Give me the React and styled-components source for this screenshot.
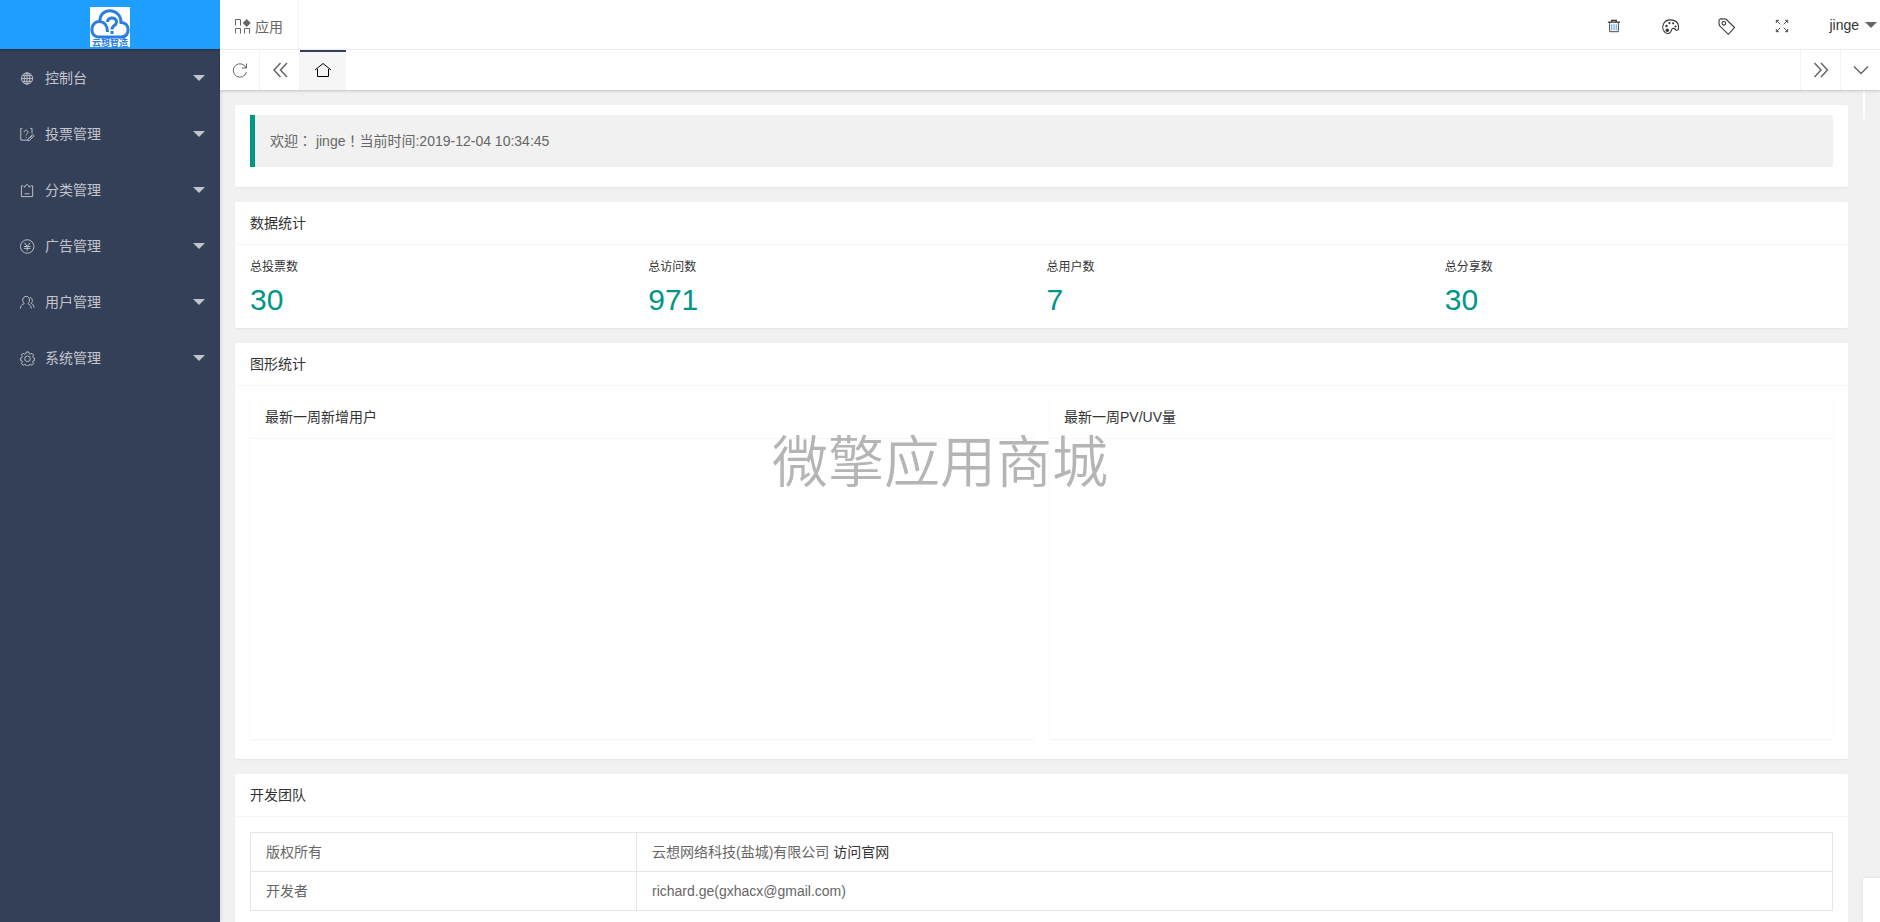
import React from "react";
import styled, { createGlobalStyle } from "styled-components";

const GlobalStyle = createGlobalStyle`
  * {
    box-sizing: border-box;
  }

  body {
    margin: 0;
    background: #f1f1f1;
    color: #666;
    font: 14px/24px "Liberation Sans", "Noto Sans CJK SC", sans-serif;
  }

  button {
    padding: 0;
    border: 0;
    background: none;
    color: inherit;
    font: inherit;
    cursor: pointer;
  }

  a {
    color: inherit;
    text-decoration: none;
  }
`;

const Layout = styled.div`
  display: flex;
  height: 100vh;
  overflow: hidden;
`;

const Side = styled.aside`
  flex: none;
  width: 220px;
  background: #344058;
  color: #c2c5cc;
  box-shadow: 1px 0 4px rgba(0, 0, 0, 0.1);
`;

const LogoBar = styled.div`
  display: flex;
  justify-content: center;
  height: 49px;
  padding-top: 7px;
  background: #1e9fff;
  box-shadow: 0 1px 2px rgba(0, 0, 0, 0.3);
`;

const LogoBox = styled.div`
  display: flex;
  flex-direction: column;
  align-items: center;
  width: 40px;
  height: 40px;
  background: #fff;
`;

const LogoText = styled.span`
  color: #2a7de1;
  font-size: 9px;
  font-weight: 700;
  line-height: 8px;
`;

const Menu = styled.nav`
  display: flex;
  flex-direction: column;
  padding-top: 1px;
`;

const MenuItem = styled.button`
  display: flex;
  align-items: center;
  gap: 10px;
  height: 56px;
  padding: 0 15px 0 20px;
  text-align: left;
`;

const MenuLabel = styled.span`
  flex: 1;
`;

const Arrow = styled.span`
  border: 6px solid transparent;
  border-top-color: ${(props) => props.$color || "#c2c5cc"};
  border-bottom-width: 0;
`;

const Main = styled.div`
  display: flex;
  flex: 1;
  flex-direction: column;
  min-width: 0;
`;

const Header = styled.header`
  display: flex;
  justify-content: space-between;
  height: 50px;
  background: #fff;
  border-bottom: 1px solid #f4f4f4;
`;

const AppTab = styled.button`
  display: flex;
  align-items: center;
  gap: 4px;
  padding: 4px 15px 0 15px;
  border-right: 1px solid #f4f4f4;
`;

const Tools = styled.div`
  display: flex;
  color: #333;
`;

const Tool = styled.button`
  display: flex;
  align-items: center;
  justify-content: center;
  width: 56px;
  padding-top: 3px;
`;

const User = styled.button`
  display: flex;
  align-items: center;
  gap: 6px;
  padding: 0 3px 0 19px;
`;

const Tabs = styled.div`
  display: flex;
  flex: none;
  height: 40px;
  background: #fff;
  box-shadow: 0 1px 3px rgba(0, 0, 0, 0.2);
  z-index: 1;
`;

const TabButton = styled.button`
  display: flex;
  align-items: center;
  justify-content: center;
  width: 40px;
  border-${(props) => props.$edge}: 1px solid #f4f4f4;
`;

const HomeTab = styled.button`
  display: flex;
  justify-content: center;
  width: 46px;
  margin-right: auto;
  padding-top: 10px;
  background: #f6f6f6;
  border-top: 2px solid #344058;
  color: #000;
`;

const Body = styled.div`
  display: flex;
  flex: 1;
  gap: 15px;
  min-height: 0;
  padding-left: 15px;
`;

const Content = styled.main`
  flex: 1;
  min-width: 0;
  padding: 15px 0;
  overflow-y: auto;
  scrollbar-width: none;
`;

const Rail = styled.div`
  display: flex;
  flex-direction: column;
  justify-content: space-between;
  width: 17px;
`;

const RailTop = styled.div`
  width: 2px;
  height: 29px;
  background: #fff;
`;

const RailBottom = styled.div`
  height: 44px;
  background: #fff;
  box-shadow: 0 0 3px rgba(0, 0, 0, 0.08);
`;

const Card = styled.section`
  margin-bottom: 15px;
  background: #fff;
  border-radius: 2px;
  box-shadow: 0 1px 2px rgba(0, 0, 0, 0.05);
`;

const CardTitle = styled.h2`
  height: 43px;
  margin: 0;
  padding: 0 15px;
  border-bottom: 1px solid #f6f6f6;
  color: #333;
  font-size: 14px;
  font-weight: 400;
  line-height: 42px;
`;

const CardBody = styled.div`
  padding: ${(props) => props.$pad || "10px 15px"};
`;

const Quote = styled.blockquote`
  margin: 0 0 10px;
  padding: 15px;
  background: #f1f1f1;
  border-left: 5px solid #009688;
  border-radius: 0 2px 2px 0;
  font-family: "Liberation Sans", "Noto Sans CJK TC", sans-serif;
  line-height: 22px;
`;

const Stats = styled.dl`
  display: grid;
  grid-template-columns: repeat(4, 1fr);
  gap: 10px;
  margin: 0;
`;

const StatLabel = styled.dt`
  color: #333;
  font-size: 12px;
  line-height: 24px;
`;

const StatValue = styled.dd`
  margin: 3px 0 0;
  color: #009688;
  font-size: 30px;
  line-height: 36px;
`;

const Charts = styled.div`
  display: grid;
  grid-template-columns: 1fr 1fr;
  gap: 15px;
  margin-bottom: 10px;
`;

const ChartCard = styled(Card)`
  margin: 0;
`;

const ChartArea = styled.div`
  height: 300px;
`;

const Table = styled.table`
  width: 100%;
  border-collapse: collapse;

  th,
  td {
    height: 39px;
    padding: 0 15px;
    border: 1px solid #e6e6e6;
    font-weight: 400;
    text-align: left;
    line-height: 20px;
  }

  th {
    width: 386px;
  }

  a {
    color: #333;
  }
`;

const Watermark = styled.div`
  position: fixed;
  inset: 0;
  display: flex;
  align-items: center;
  justify-content: center;
  padding-bottom: 6px;
  color: #b5b5b5;
  font-family: "Noto Sans CJK SC", sans-serif;
  font-size: 56px;
  font-weight: 350;
  line-height: 56px;
  pointer-events: none;
  z-index: 2;
`;

const Icon = ({ size = 16, weight = 1, children }) => (
  <svg
    width={size}
    height={size}
    viewBox="0 0 16 16"
    fill="none"
    stroke="currentColor"
    strokeWidth={weight}
    aria-hidden="true"
  >
    {children}
  </svg>
);

const GlobeIcon = () => (
  <Icon size={15}>
    <circle cx="7.500" cy="8" r="6" />
    <ellipse cx="7.500" cy="8" rx="3" ry="6" />
    <path d="M7.500 2v12M1.500 8h12M2.500 5h10M2.500 11h10" />
  </Icon>
);

const VoteIcon = () => (
  <Icon size={15}>
    <path d="M2.500 1.500H.8v12.500H9M11 1.500h1.800V7" />
    <path d="M4.500 5.500c0-3 4-2.500 4 0 0 1.500-2 1.500-2 3.500M6.500 10.500v1" />
    <path d="M8.500 13l5-5 1.500 1.500-5 5H8.500zM10.500 12l2.500-2.500" />
  </Icon>
);

const ClipboardIcon = () => (
  <Icon size={15}>
    <path d="M3.500 3H1.500v11.500h12V3h-2" />
    <path d="M4.500 5V3.500H6c0-2.500 3-2.500 3 0h1.500V5M5 11.500h5" />
  </Icon>
);

const YenIcon = () => (
  <Icon size={15}>
    <circle cx="7.700" cy="8" r="7.200" />
    <path d="M4.700 4l3 4 3-4M4.200 8h7M4.200 10h7M7.700 8v4.500" />
  </Icon>
);

const UserIcon = () => (
  <Icon size={15}>
    <path d="M.5 14.500c0-3 1.500-4.500 4-5.200C1.500 6 3 1.500 6.500 1.500s5 4.500 2 7.800c2 .7 3.300 2.200 3.500 5.200" />
    <path d="M10.500 2.500c3 .8 3.500 4 1.500 6.500 1.500.7 2.700 2 3 4.500" />
  </Icon>
);

const GearIcon = () => (
  <Icon size={15}>
    <path d="M6.700 1h2.600l.5 1.900 1.200.5 1.700-1 1.800 1.800-1 1.700.5 1.200 1.500.4v2.600l-1.500.4-.5 1.200 1 1.700-1.800 1.800-1.700-1-1.200.5-.5 1.300H6.700l-.5-1.300-1.200-.5-1.700 1-1.800-1.800 1-1.700-.5-1.200L.6 10V7.500L2 7.100l.5-1.200-1-1.700 1.800-1.800 1.700 1 1.200-.5z" />
    <circle cx="8" cy="8.300" r="3" />
  </Icon>
);

const AppIcon = () => (
  <Icon>
    <path d="M.5 6.500v-6h5v6M.5 14.500v-5h5v5M9.500 14.500v-5h5v5" />
    <path d="M11.700 0l4 4-4 4-4-4z" fill="currentColor" stroke="none" />
  </Icon>
);

const TrashIcon = () => (
  <Icon size={14}>
    <path d="M1 3.500h14M5.500 3V1.500h5V3" strokeWidth="1.500" />
    <path d="M3 4v10.500h10V4" />
    <path d="M5.500 6v7M8 6v7M10.500 6v7" stroke="#4a90c8" />
  </Icon>
);

const PaletteIcon = () => (
  <Icon size={17}>
    <path d="M3.500 14C1 12.500 0 9 1.500 5.500 3 2.500 6.500 1.300 10 2c4 .8 6 4 5.500 8-.3 2-2 2-3 .7-1.500-1.700-3.500-.9-3.700 1C8.500 14 5.500 15.500 3.500 14z" />
    <g fill="currentColor" stroke="none">
      <circle cx="7" cy="4.800" r="1" />
      <circle cx="10.500" cy="5" r="1" />
      <circle cx="4.200" cy="7.500" r="1.100" />
      <circle cx="12.700" cy="8" r="1" />
      <circle cx="5" cy="11.500" r="1.600" />
    </g>
  </Icon>
);

const TagIcon = () => (
  <Icon size={17}>
    <path d="M1 5.500V1.800L2.500.7l5 .3 8 8-5.800 6.300-8.200-8z" />
    <circle cx="5.500" cy="5" r="1.700" />
  </Icon>
);

const ExpandIcon = () => (
  <Icon size={14}>
    <path d="M1.500 4.500v-3h3M2 2l4 4M11.500 1.500h3v3M14 2l-4 4M1.500 11.500v3h3M2 14l4-4M11.500 14.500h3v-3M14 14l-4-4" />
  </Icon>
);

const RefreshIcon = () => (
  <Icon>
    <path d="M14.200 6A6.700 6.700 0 1 0 14.500 10M14.500 1.500V6H10" />
  </Icon>
);

const LeftIcon = () => (
  <Icon weight={1.500}>
    <path d="M8.500 1L2 8l6.500 7M15 1L8.500 8l6.500 7" />
  </Icon>
);

const RightIcon = () => (
  <Icon weight={1.500}>
    <path d="M1.500 1L8 8l-6.500 7M8 1l6.500 7L8 15" />
  </Icon>
);

const DownIcon = () => (
  <Icon weight={1.500}>
    <path d="M1 4.500l7 7 7-7" />
  </Icon>
);

const HomeIcon = () => (
  <Icon>
    <path d="M0 8l8-6.500L16 8M2.500 7v7.500h11V7" />
  </Icon>
);

const menus = [
  { name: "控制台", icon: GlobeIcon },
  { name: "投票管理", icon: VoteIcon },
  { name: "分类管理", icon: ClipboardIcon },
  { name: "广告管理", icon: YenIcon },
  { name: "用户管理", icon: UserIcon },
  { name: "系统管理", icon: GearIcon },
];

const tools = [
  { name: "清除缓存", icon: TrashIcon },
  { name: "主题", icon: PaletteIcon },
  { name: "便签", icon: TagIcon },
  { name: "全屏", icon: ExpandIcon },
];

const stats = [
  { name: "总投票数", value: 30 },
  { name: "总访问数", value: 971 },
  { name: "总用户数", value: 7 },
  { name: "总分享数", value: 30 },
];

const Logo = () => (
  <LogoBox>
    <svg width="40" height="32" viewBox="0 0 40 32" fill="none" stroke="#2a7de1" strokeWidth="3">
      <path d="M17.500 25c0-6-3-10.500-8.500-10.500-9 0-10 15.500 0 15.500h22c10 0 9-15 0-14.500C31 0 9 0 10 14.500" />
      <path d="M17.500 15c0-5.500 9-5.500 9 0 0 4-4.500 3-4.500 7.500M22 24v3" />
    </svg>
    <LogoText>云想智造</LogoText>
  </LogoBox>
);

const Sidebar = () => (
  <Side>
    <LogoBar>
      <Logo />
    </LogoBar>
    <Menu>
      {menus.map(({ name, icon: MenuIcon }) => (
        <MenuItem key={name}>
          <MenuIcon />
          <MenuLabel>{name}</MenuLabel>
          <Arrow />
        </MenuItem>
      ))}
    </Menu>
  </Side>
);

const App = () => {
  return (
    <Layout>
      <GlobalStyle />
      <Sidebar />
      <Main>
        <Header>
          <AppTab>
            <AppIcon />
            应用
          </AppTab>
          <Tools>
            {tools.map(({ name, icon: ToolIcon }) => (
              <Tool key={name} aria-label={name}>
                <ToolIcon />
              </Tool>
            ))}
            <User>
              jinge
              <Arrow $color="#666" />
            </User>
          </Tools>
        </Header>
        <Tabs>
          <TabButton $edge="right" aria-label="刷新">
            <RefreshIcon />
          </TabButton>
          <TabButton $edge="right" aria-label="向左">
            <LeftIcon />
          </TabButton>
          <HomeTab aria-label="首页">
            <HomeIcon />
          </HomeTab>
          <TabButton $edge="left" aria-label="向右">
            <RightIcon />
          </TabButton>
          <TabButton $edge="left" aria-label="更多">
            <DownIcon />
          </TabButton>
        </Tabs>
        <Body>
          <Content>
            <Card>
              <CardBody>
                <Quote>欢迎： jinge！当前时间:2019-12-04 10:34:45</Quote>
              </CardBody>
            </Card>
            <Card>
              <CardTitle>数据统计</CardTitle>
              <CardBody>
                <Stats>
                  {stats.map(({ name, value }) => (
                    <div key={name}>
                      <StatLabel>{name}</StatLabel>
                      <StatValue>{value}</StatValue>
                    </div>
                  ))}
                </Stats>
              </CardBody>
            </Card>
            <Card>
              <CardTitle>图形统计</CardTitle>
              <CardBody>
                <Charts>
                  <ChartCard>
                    <CardTitle>最新一周新增用户</CardTitle>
                    <ChartArea />
                  </ChartCard>
                  <ChartCard>
                    <CardTitle>最新一周PV/UV量</CardTitle>
                    <ChartArea />
                  </ChartCard>
                </Charts>
              </CardBody>
            </Card>
            <Card>
              <CardTitle>开发团队</CardTitle>
              <CardBody $pad="15px">
                <Table>
                  <tbody>
                    <tr>
                      <th scope="row">版权所有</th>
                      <td>
                        云想网络科技(盐城)有限公司 <a href="#site">访问官网</a>
                      </td>
                    </tr>
                    <tr>
                      <th scope="row">开发者</th>
                      <td>richard.ge(gxhacx@gmail.com)</td>
                    </tr>
                  </tbody>
                </Table>
              </CardBody>
            </Card>
          </Content>
          <Rail>
            <RailTop />
            <RailBottom />
          </Rail>
        </Body>
      </Main>
      <Watermark>微擎应用商城</Watermark>
    </Layout>
  );
};

export default App;
